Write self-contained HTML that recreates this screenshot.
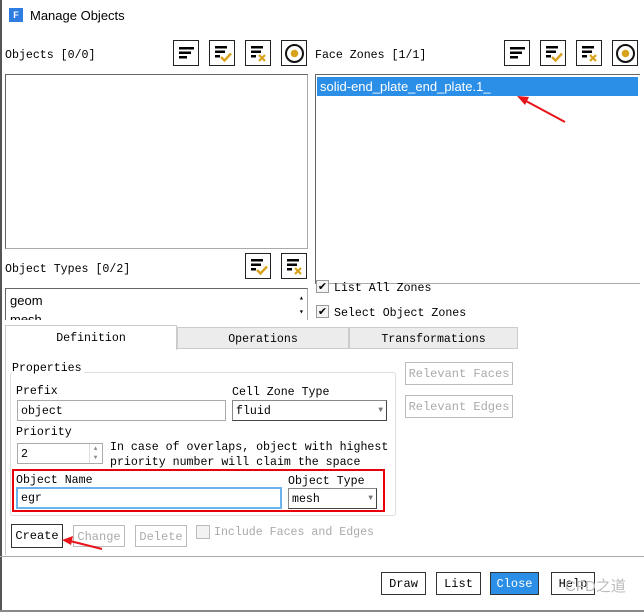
<!DOCTYPE html>
<html><head><meta charset="utf-8"><style>
*{box-sizing:border-box;margin:0;padding:0}
body{width:644px;height:612px;background:#fff;position:relative;overflow:hidden;font-family:"Liberation Mono",monospace;font-size:11.6px;color:#000}
.a{position:absolute;white-space:nowrap}
.t{margin-top:3px}
.ib{position:absolute;width:26px;height:26px;border:1px solid #222;background:#fff}
.ib svg{position:absolute;left:0;top:0}
.box{position:absolute;border:1px solid #aaa;border-top-color:#666;border-left-color:#666;background:#fff}
.btn{position:absolute;border:1px solid #333;background:#fff;text-align:center;line-height:20px;font-size:12px}
.dis{border-color:#bbb;color:#aaa}
.sel{position:absolute;border:1px solid #888;background:#fff;border-right-color:#444;border-bottom-color:#444}
.cb{position:absolute;width:13px;height:13px;border:1px solid #999;background:#f4f4f4;font-size:11px;line-height:11px;text-align:center;font-family:"DejaVu Sans",sans-serif}
</style></head><body>
<div class="a" style="left:0;top:0;width:2px;height:612px;background:#555"></div>
<div class="a" style="left:9px;top:8px;width:14px;height:14px;background:#2f7de1;color:#fff;font:bold 9px 'Liberation Sans',sans-serif;text-align:center;line-height:14px">F</div>
<div class="a" style="left:30px;top:8px;font:13px 'Liberation Sans',sans-serif">Manage Objects</div>

<div class="a t" style="left:5px;top:46px">Objects [0/0]</div>
<div class="a t" style="left:315px;top:46px">Face Zones [1/1]</div>

<svg width="0" height="0" style="position:absolute"><defs>
<g id="lines"><rect x="5" y="6" width="15" height="2.5"/><rect x="5" y="10.5" width="12" height="2.5"/><rect x="5" y="15" width="8" height="2.5"/></g>
<g id="chk"><rect x="5" y="5" width="12" height="2.5"/><rect x="5" y="9.5" width="10" height="2.5"/><rect x="5" y="14" width="5" height="2.5"/><path d="M11 16l3.5 3.5 6.5-7" fill="none" stroke="#d9a21b" stroke-width="2.4"/></g>
<g id="x"><rect x="5" y="5" width="12" height="2.5"/><rect x="5" y="9.5" width="10" height="2.5"/><rect x="5" y="14" width="5" height="2.5"/><path d="M13 14l6 6M19 14l-6 6" stroke="#d9a21b" stroke-width="2.2"/></g>
<g id="rad"><circle cx="12.5" cy="12.5" r="8.5" fill="none" stroke="#111" stroke-width="2"/><circle cx="12.5" cy="12.5" r="3.8" fill="#d9a21b"/></g>
</defs></svg>
<div class="ib" style="left:173px;top:40px"><svg width="26" height="26"><use href="#lines"/></svg></div>
<div class="ib" style="left:209px;top:40px"><svg width="26" height="26"><use href="#chk"/></svg></div>
<div class="ib" style="left:245px;top:40px"><svg width="26" height="26"><use href="#x"/></svg></div>
<div class="ib" style="left:281px;top:40px"><svg width="26" height="26"><use href="#rad"/></svg></div>
<div class="ib" style="left:504px;top:40px"><svg width="26" height="26"><use href="#lines"/></svg></div>
<div class="ib" style="left:540px;top:40px"><svg width="26" height="26"><use href="#chk"/></svg></div>
<div class="ib" style="left:576px;top:40px"><svg width="26" height="26"><use href="#x"/></svg></div>
<div class="ib" style="left:612px;top:40px"><svg width="26" height="26"><use href="#rad"/></svg></div>

<div class="box" style="left:5px;top:74px;width:303px;height:175px"></div>
<div class="box" style="left:315px;top:74px;width:325px;height:210px;border-right:none"></div>
<div class="a" style="left:317px;top:77px;width:321px;height:19px;background:#2b8fe8;color:#fff;font:13px 'Liberation Sans',sans-serif;line-height:19px;padding-left:3px">solid-end_plate_end_plate.1_</div>

<div class="a t" style="left:5px;top:260px">Object Types [0/2]</div>
<div class="ib" style="left:245px;top:253px"><svg width="26" height="26"><use href="#chk"/></svg></div>
<div class="ib" style="left:281px;top:253px"><svg width="26" height="26"><use href="#x"/></svg></div>
<div class="box" style="left:5px;top:288px;width:303px;height:32px;overflow:hidden;border-bottom:none">
<div style="font:13px 'Liberation Sans',sans-serif;padding:2px 0 0 4px;line-height:19px">geom<br>mesh</div></div>
<div class="a" style="left:299px;top:293px;font-size:8px">▴</div>
<div class="a" style="left:299px;top:307px;font-size:8px">▾</div>

<div class="cb" style="left:316px;top:280px">✔</div>
<div class="a t" style="left:334px;top:279px">List All Zones</div>
<div class="cb" style="left:316px;top:305px">✔</div>
<div class="a t" style="left:334px;top:304px">Select Object Zones</div>

<div class="a" style="left:177px;top:327px;width:172px;height:22px;background:#ececec;border:1px solid #ccc;text-align:center;line-height:23px">Operations</div>
<div class="a" style="left:349px;top:327px;width:169px;height:22px;background:#ececec;border:1px solid #ccc;text-align:center;line-height:23px">Transformations</div>
<div class="a" style="left:5px;top:325px;width:172px;height:25px;background:#fff;border:1px solid #ccc;border-bottom:none;text-align:center;line-height:26px">Definition</div>
<div class="a" style="left:5px;top:349px;width:1px;height:206px;background:#ccc"></div>

<div class="a" style="left:10px;top:372px;width:386px;height:144px;border:1px solid #ddd;border-radius:3px"></div>
<div class="a t" style="left:12px;top:359px;background:#fff;padding-right:2px">Properties</div>
<div class="a t" style="left:16px;top:382px">Prefix</div>
<div class="a t" style="left:232px;top:383px">Cell Zone Type</div>
<div class="a" style="left:17px;top:400px;width:209px;height:21px;border:1px solid #aaa;padding:3px 3px;line-height:15px">object</div>
<div class="sel" style="left:232px;top:400px;width:155px;height:21px;padding:3px;line-height:15px">fluid<span style="position:absolute;right:3px;top:2px;font-size:8px;color:#777">▼</span></div>
<div class="a t" style="left:16px;top:423px">Priority</div>
<div class="a" style="left:17px;top:443px;width:86px;height:21px;border:1px solid #aaa;padding:3px 3px;line-height:15px">2<span style="position:absolute;right:1px;top:0;width:12px;height:19px;border-left:1px solid #ddd;font-size:6px;color:#888;line-height:9px;text-align:center">▲<br>▼</span></div>
<div class="a" style="left:110px;top:440px;line-height:15px">In case of overlaps, object with highest<br>priority number will claim the space</div>

<div class="a" style="left:12px;top:469px;width:373px;height:43px;border:2px solid #e8000b"></div>
<div class="a t" style="left:16px;top:471px">Object Name</div>
<div class="a t" style="left:288px;top:472px">Object Type</div>
<div class="a" style="left:16px;top:487px;width:266px;height:22px;border:2px solid #6ab3ee;padding:2px 3px;line-height:16px">egr</div>
<div class="sel" style="left:288px;top:488px;width:89px;height:21px;padding:3px;line-height:15px">mesh<span style="position:absolute;right:3px;top:2px;font-size:8px;color:#777">▼</span></div>

<div class="btn dis" style="left:405px;top:362px;width:108px;height:23px;line-height:22px">Relevant Faces</div>
<div class="btn dis" style="left:405px;top:395px;width:108px;height:23px;line-height:22px">Relevant Edges</div>

<div class="btn" style="left:11px;top:524px;width:52px;height:24px;line-height:23px">Create</div>
<div class="btn dis" style="left:73px;top:525px;width:52px;height:22px;line-height:22px">Change</div>
<div class="btn dis" style="left:135px;top:525px;width:52px;height:22px;line-height:22px">Delete</div>
<div class="a" style="left:196px;top:525px;width:14px;height:14px;border:1px solid #bbb;background:#f2f2f2"></div>
<div class="a t" style="left:214px;top:523px;color:#aaa">Include Faces and Edges</div>

<svg class="a" style="left:0;top:0" width="644" height="612">
<path d="M102 549L70 541" stroke="#e8141a" stroke-width="2"/><path d="M62 540l11-4-2 9z" fill="#e8141a"/>
<path d="M565 122L526 101" stroke="#e8141a" stroke-width="2"/><path d="M517 96l12 1-4 8z" fill="#e8141a"/>
</svg>

<div class="a" style="left:0;top:556px;width:644px;height:1px;background:#aaa"></div>
<div class="btn" style="left:381px;top:572px;width:45px;height:23px;line-height:22px">Draw</div>
<div class="btn" style="left:436px;top:572px;width:45px;height:23px;line-height:22px">List</div>
<div class="btn" style="left:490px;top:572px;width:49px;height:23px;line-height:22px;background:#2b8fe8;color:#fff">Close</div>
<div class="btn" style="left:551px;top:572px;width:44px;height:23px;line-height:22px">Help</div>
<div class="a" style="left:565px;top:575px;font:15px 'Liberation Sans','Noto Sans CJK SC',sans-serif;color:#bbb">CFD之道</div>
<div class="a" style="left:0;top:610px;width:644px;height:2px;background:#888"></div>
</body></html>
